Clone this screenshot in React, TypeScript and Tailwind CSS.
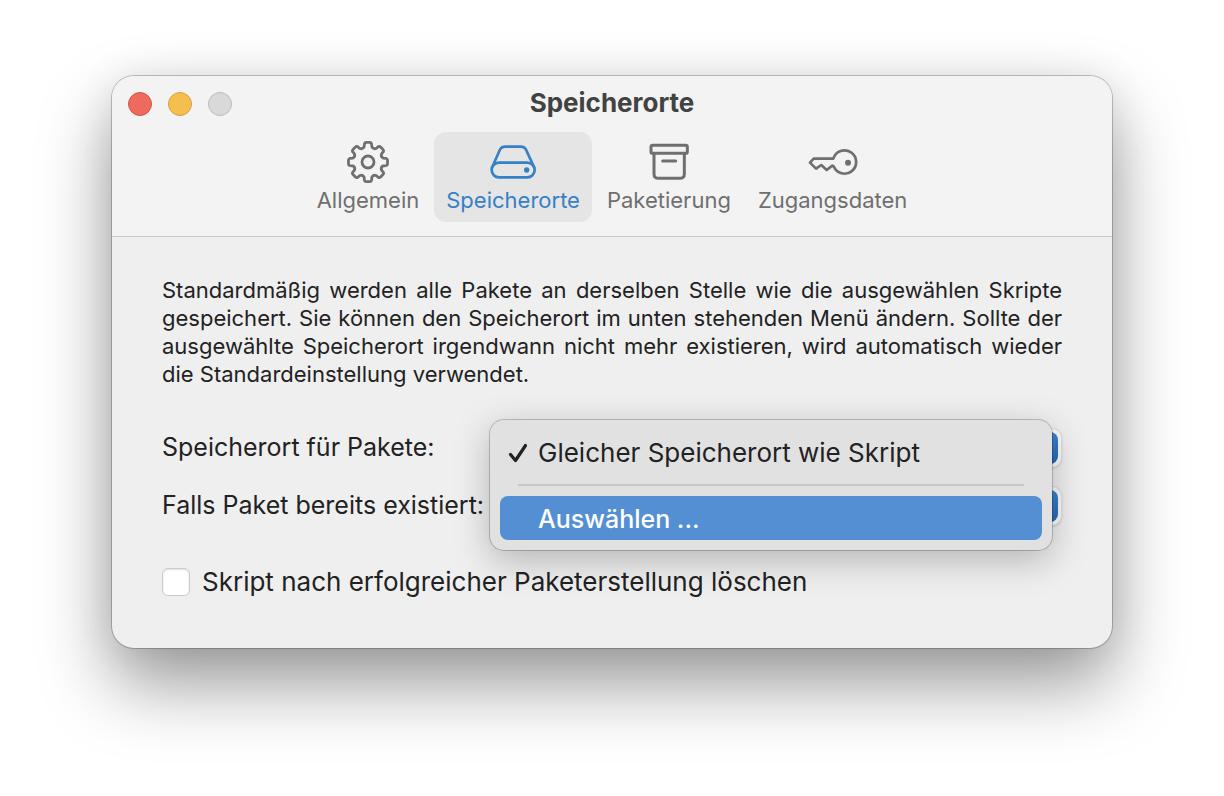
import type { ReactNode } from "react";

function gearPath(): string {
  const at = (deg: number, r: number) => {
    const a = ((deg - 90) * Math.PI) / 180;
    return `${(22 + r * Math.cos(a)).toFixed(2)} ${(22 + r * Math.sin(a)).toFixed(2)}`;
  };
  let d = "";
  for (let i = 0; i < 8; i++) {
    const t = i * 45;
    d += `${i === 0 ? "M" : "L"}${at(t - 14, 15.8)} L${at(t - 11, 18.6)} Q${at(t - 9, 19.8)} ${at(t - 5, 19.6)} L${at(t + 5, 19.6)} Q${at(t + 9, 19.8)} ${at(t + 11, 18.6)} L${at(t + 14, 15.8)} Q${at(t + 22.5, 13.4)} ${at(t + 31, 15.8)} `;
  }
  return d + "Z";
}

const GearIcon = () => (
  <svg className="h-11 w-11" viewBox="0 0 44 44" fill="none" stroke="currentColor" strokeWidth="2.8" strokeLinejoin="round" aria-hidden="true">
    <path d={gearPath()} />
    <circle cx="22" cy="22" r="6" />
  </svg>
);

const DriveIcon = () => (
  <svg className="h-9 w-12" viewBox="174 57 144 108" fill="none" stroke="currentColor" strokeWidth="8" strokeLinejoin="round" aria-hidden="true">
    <rect x="182" y="113" width="129" height="44" rx="22" />
    <path d="M184 126L206 76Q211 65 223 65H269Q281 65 286 76L309 126" />
    <circle cx="287" cy="135" r="8" fill="currentColor" stroke="none" />
  </svg>
);

const ArchiveIcon = () => (
  <svg className="h-10 w-10" viewBox="145 51 120 120" fill="none" stroke="currentColor" strokeWidth="9" strokeLinecap="round" strokeLinejoin="round" aria-hidden="true">
    <rect x="151" y="61" width="109" height="24" rx="5" />
    <path d="M160 87V147Q160 160 173 160H238Q251 160 251 147V87M186 108H225" />
  </svg>
);

const KeyIcon = () => (
  <svg className="h-7 w-[50px]" viewBox="173 70 150 84" fill="none" stroke="currentColor" strokeWidth="8" strokeLinecap="round" strokeLinejoin="round" aria-hidden="true">
    <path d="M249 102A35 35 0 1 1 250 125L246 123L229 136L213 121L197 132L179 114L190 102Z" />
    <circle cx="293" cy="114" r="9" fill="currentColor" stroke="none" />
  </svg>
);

const tabs: { label: string; icon: ReactNode }[] = [
  { label: "Allgemein", icon: <GearIcon /> },
  { label: "Speicherorte", icon: <DriveIcon /> },
  { label: "Paketierung", icon: <ArchiveIcon /> },
  { label: "Zugangsdaten", icon: <KeyIcon /> },
];

function Popup({ id, value }: { id: string; value: string }) {
  return (
    <div className="relative">
      <select
        id={id}
        defaultValue={value}
        className="h-10 w-full appearance-none rounded-[10px] border border-black/10 bg-[#fafafa] pr-12 pl-4 text-[25px] shadow-sm outline-none"
      >
        <option>{value}</option>
      </select>
      <span className="pointer-events-none absolute top-1 right-1 h-8 w-8 rounded-lg bg-linear-to-b from-[#3b83ce] to-[#2a67b3]" />
    </div>
  );
}

export default function App() {
  return (
    <div className="min-h-screen bg-white px-28 pt-19 pb-37 font-[Inter,'Liberation_Sans',sans-serif] text-[#222]">
      <main className="rounded-[22px] bg-[#efefef] shadow-[0_0_0_1px_rgba(0,0,0,0.22),0_36px_72px_rgba(0,0,0,0.4),0_0_40px_rgba(0,0,0,0.08)]">
        <header className="rounded-t-[22px] border-b border-[#c9c9c9] bg-[#f3f3f3] pb-3.5">
          <div className="grid h-14 grid-cols-[1fr_auto_1fr] items-center px-4">
            <div className="flex gap-4">
              <button aria-label="Schließen" className="h-6 w-6 rounded-full border border-[#d35549] bg-[#ed6a5e]" />
              <button aria-label="Minimieren" className="h-6 w-6 rounded-full border border-[#d7a03c] bg-[#f5bf4f]" />
              <button aria-label="Zoomen" disabled className="h-6 w-6 rounded-full border border-[#bcbcbc] bg-[#d9d9d9]" />
            </div>
            <h1 className="pb-0.5 text-[26px] leading-8 font-bold text-[#424242]">Speicherorte</h1>
          </div>
          <nav className="flex justify-center gap-[3px]">
            {tabs.map((tab, i) => (
              <button
                key={tab.label}
                aria-current={i === 1 ? "page" : undefined}
                className={`flex h-[90px] flex-col items-center rounded-xl px-3 pt-2 text-[22px] leading-7 ${
                  i === 1 ? "bg-[#e5e5e5] text-[#3580c6]" : "text-[#6f6f6f]"
                }`}
              >
                <span className="flex h-11 items-center">{tab.icon}</span>
                <span className="mt-0.5">{tab.label}</span>
              </button>
            ))}
          </nav>
        </header>

        <section className="px-[50px] pt-[39px] pb-[50px]">
          <p className="text-justify text-[22px] leading-7">
            Standardmäßig werden alle Pakete an derselben Stelle wie die ausgewählen Skripte gespeichert. Sie können den
            Speicherort im unten stehenden Menü ändern. Sollte der ausgewählte Speicherort irgendwann nicht mehr
            existieren, wird automatisch wieder die Standardeinstellung verwendet.
          </p>

          <div className="mt-10 grid grid-cols-[auto_1fr] items-center gap-x-2 gap-y-[18px] text-[25px] leading-8">
            <label htmlFor="location" className="pb-0.5 whitespace-nowrap">
              Speicherort für Pakete:
            </label>
            <div className="relative">
              <Popup id="location" value="Gleicher Speicherort wie Skript" />
              <ul
                role="menu"
                className="absolute -top-2 right-2.5 z-10 w-[562px] rounded-[14px] bg-[#e1e1e1] p-2.5 shadow-[0_0_0_1px_rgba(0,0,0,0.2),0_10px_36px_rgba(0,0,0,0.25)]"
              >
                <li role="none">
                  <button role="menuitemradio" aria-checked="true" className="flex h-11 w-full items-center px-2 pt-0.5 text-left text-[26px]">
                    <svg className="mr-2.5 h-5 w-5" viewBox="0 0 20 20" fill="none" stroke="currentColor" strokeWidth="3.2" strokeLinecap="round" strokeLinejoin="round" aria-hidden="true">
                      <path d="M2.5 11.5L7.5 17.5L17.5 2.5" />
                    </svg>
                    Gleicher Speicherort wie Skript
                  </button>
                </li>
                <li role="separator" className="mx-[18px] my-2.5 h-0.5 bg-[#c6c6c6]" />
                <li role="none">
                  <button role="menuitem" className="flex h-11 w-full items-center rounded-lg bg-[#538fd2] pt-0.5 pl-[38px] text-left font-medium text-white">
                    Auswählen ...
                  </button>
                </li>
              </ul>
            </div>
            <label htmlFor="existing" className="pb-0.5 whitespace-nowrap">
              Falls Paket bereits existiert:
            </label>
            <Popup id="existing" value="Überschreiben" />
          </div>

          <label className="mt-10 flex items-center gap-3 text-[26px] leading-8">
            <input
              type="checkbox"
              className="h-7 w-7 shrink-0 appearance-none rounded-md border border-[#cbcbcb] bg-white shadow-[inset_0_1px_2px_rgba(0,0,0,0.12)]"
            />
            Skript nach erfolgreicher Paketerstellung löschen
          </label>
        </section>
      </main>
    </div>
  );
}
